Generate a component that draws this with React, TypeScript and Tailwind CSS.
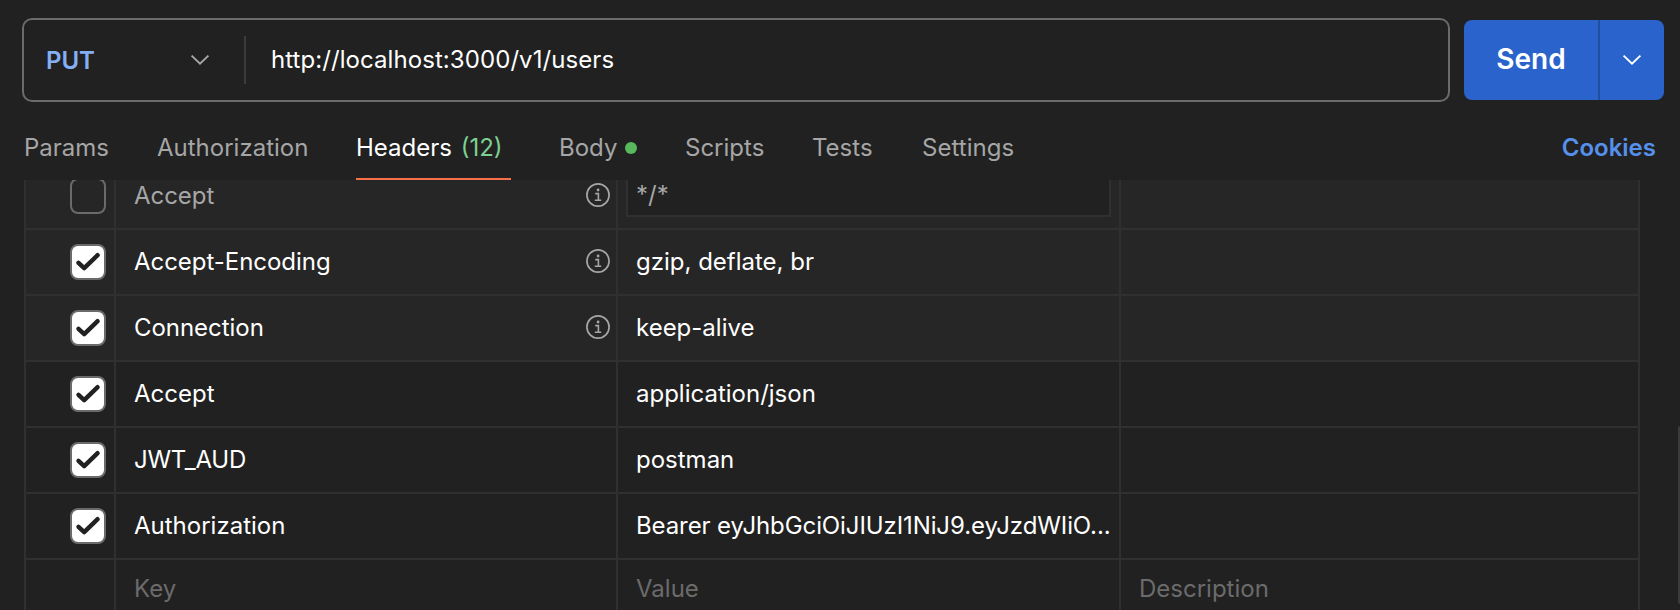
import React from 'react';

type HeaderRow = {
  name: string;
  value: string;
  checked: boolean;
  auto: boolean;
};

const rows: HeaderRow[] = [
  { name: 'Accept', value: '*/*', checked: false, auto: true },
  { name: 'Accept-Encoding', value: 'gzip, deflate, br', checked: true, auto: true },
  { name: 'Connection', value: 'keep-alive', checked: true, auto: true },
  { name: 'Accept', value: 'application/json', checked: true, auto: false },
  { name: 'JWT_AUD', value: 'postman', checked: true, auto: false },
  { name: 'Authorization', value: 'Bearer eyJhbGciOiJIUzI1NiJ9.eyJzdWIiO...', checked: true, auto: false },
];

function Chevron({ className }: { className: string }) {
  return (
    <svg className={className} width="20" height="12" viewBox="0 0 20 12" fill="none" stroke="currentColor" strokeWidth="2">
      <path d="M1.6 1.6 10 9.6 18.4 1.6" />
    </svg>
  );
}

function InfoIcon() {
  return (
    <svg className="mt-[-2px] shrink-0 text-[#a6a6a6]" width="24" height="24" viewBox="0 0 24 24" fill="none" stroke="currentColor">
      <circle cx="12" cy="12" r="11.1" strokeWidth="1.7" />
      <path d="M9.2 10.6H12.4V17.3M8.8 17.3H15.2" strokeWidth="1.6" />
      <circle cx="12.1" cy="7" r="1.4" fill="currentColor" stroke="none" />
    </svg>
  );
}

function Checkbox({ checked }: { checked: boolean }) {
  return (
    <span
      className={`flex size-9 items-center justify-center rounded-[8px] border-2 border-[#6b6b6b] ${checked ? 'bg-white' : ''}`}
    >
      {checked && (
        <svg width="32" height="32" viewBox="0 0 32 32" fill="none" stroke="#212121" strokeWidth="4.4" strokeLinecap="round" strokeLinejoin="round">
          <path d="M6.5 16.8 12.2 22.2 25.6 9.2" />
        </svg>
      )}
    </span>
  );
}

const grid = 'grid grid-cols-[90px_502px_503px_519px] border-b-2 border-l-2 border-[#303030]';
const cell = 'flex items-center border-r-2 border-[#303030]';

function Row({ row }: { row: HeaderRow }) {
  return (
    <div className={`${grid} h-[66px] ${row.auto ? 'bg-[#262626]' : ''} ${row.checked ? 'text-white' : 'text-[#a6a6a6]'}`}>
      <div className={`${cell} justify-end pr-2`}>
        <Checkbox checked={row.checked} />
      </div>
      <div className={`${cell} justify-between pl-[18px] pr-1.5 ${row.name === 'JWT_AUD' ? 'tracking-[-0.25px]' : row.auto ? 'tracking-[-0.04px]' : ''}`}>
        <span>{row.name}</span>
        {row.auto && <InfoIcon />}
      </div>
      <div className={`${cell} pl-2 pr-2`}>
        {row.checked ? (
          <span className={`whitespace-nowrap pl-2.5 ${row.value.length > 30 ? 'tracking-[-0.1px]' : ''}`}>{row.value}</span>
        ) : (
          <span className="mb-[2px] flex h-[44px] w-full items-center border-2 border-[#303030] bg-[#212121] pl-2">{row.value}</span>
        )}
      </div>
      <div className={cell} />
    </div>
  );
}

export default function App() {
  return (
    <div className="relative h-[610px] w-[1680px] overflow-hidden bg-[#212121] font-['Inter',sans-serif] text-[24px] leading-8 text-[#a6a6a6]">
      <div className="flex h-[102px] items-end pl-[22px]">
        <div className="flex h-[84px] w-[1428px] items-center rounded-[10px] border-2 border-[#6b6b6b]">
          <div className="flex h-12 w-[222px] items-center justify-between border-r-2 border-[#3b3b3b] pl-[22px] pr-[34px]">
            <span className="pt-0.5 font-semibold tracking-[-0.1px] text-[#85aff5]">PUT</span>
            <Chevron className="text-[#a6a6a6]" />
          </div>
          <span className="pl-[25px] tracking-[0.07px] text-white">http://localhost:3000/v1/users</span>
        </div>
        <div className="mb-0.5 ml-3.5 flex h-20 w-[200px] overflow-hidden rounded-[8px] bg-[#2a63cc] text-white">
          <div className="flex w-[136px] items-center justify-center border-r-2 border-[#214f9f] pb-0.5 text-[28px] font-semibold">Send</div>
          <div className="flex flex-1 items-center justify-center">
            <Chevron className="" />
          </div>
        </div>
      </div>

      <div className="flex h-[78px] items-stretch pl-6 pr-6 [&>*]:pt-[30px]">
        <div className="w-[133px]">Params</div>
        <div className="w-[199px]">Authorization</div>
        <div className="mr-[48px] w-[155px] whitespace-nowrap border-b-2 border-[#f8704a] text-white">
          Headers <span className="ml-[2px] text-[#7ecf92]">(12)</span>
        </div>
        <div className="flex w-[126px] gap-2">
          Body
          <span className="mt-[10px] size-3 rounded-full bg-[#58b85c]" />
        </div>
        <div className="w-[127px]">Scripts</div>
        <div className="w-[110px]">Tests</div>
        <div className="tracking-[0.05px]">Settings</div>
        <div className="ml-auto font-semibold text-[#5590eb]">Cookies</div>
      </div>

      <div className="h-[430px] overflow-hidden pl-6">
        <div className="-mt-4 w-[1616px]">
          {rows.map((row, i) => (
            <Row key={i} row={row} />
          ))}
          <div className={`${grid} h-[60px] text-[#6b6b6b]`}>
            <div className={cell} />
            <div className={`${cell} pl-[18px]`}>Key</div>
            <div className={`${cell} pl-[18px]`}>Value</div>
            <div className={`${cell} pl-[18px]`}>Description</div>
          </div>
        </div>
      </div>

      <div className="absolute right-0 top-[426px] h-[178px] w-0.5 rounded-l-[2px] bg-[#3b3b3b]" />
    </div>
  );
}
